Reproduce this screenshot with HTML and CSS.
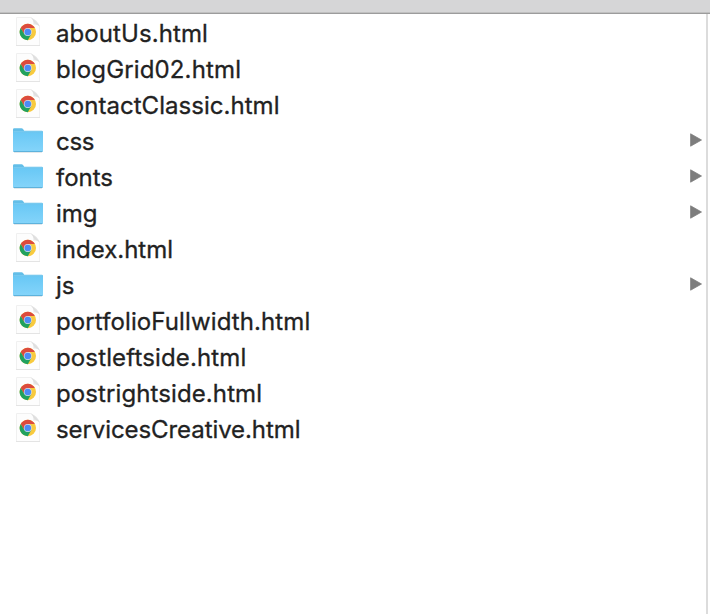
FILE: index.html
```html
<!DOCTYPE html>
<html lang="en">
<head>
<meta charset="utf-8">
<title>Files</title>
<link rel="stylesheet" href="styles.css">
</head>
<body>
<svg class="defs" aria-hidden="true">
  <defs>
    <linearGradient id="folder-fill" x1="0" y1="0" x2="0" y2="1"><stop offset="0" stop-color="#69c8f5"/><stop offset="1" stop-color="#84d4fa"/></linearGradient>
    <linearGradient id="fold-fill" x1="0" y1="1" x2="1" y2="0"><stop offset="0" stop-color="#fff"/><stop offset="0.5" stop-color="#dedede"/><stop offset="1" stop-color="#fafafa"/></linearGradient>
    <symbol id="html-file" viewBox="0 0 32 32">
      <path d="M4.500 1.500h15l8 8v20h-23z" fill="#fdfdfd" stroke="#f0f0f0"/>
      <path d="M4 29.500h24" stroke="#e4e4e4"/>
      <path d="M18.500 1.500q3.500 2.500 2.800 7.200q4-.7 6.200 1.800q-1.500-6.500-9-9z" fill="url(#fold-fill)"/>
      <circle cx="15.800" cy="16" r="8.200" fill="#f8ca3e"/>
      <path d="M8.700 11.900A8.200 8.200 0 0 1 22.900 11.900H15.800L12.250 18.050Z" fill="#dc4b3e"/>
      <path d="M8.700 11.900A8.200 8.200 0 0 0 15.800 24.200L19.350 18.050H12.250Z" fill="#20a15f"/>
      <circle cx="15.800" cy="16" r="3.900" fill="#d5dcec"/>
      <circle cx="15.800" cy="16" r="3.300" fill="#4c8bf5"/>
    </symbol>
    <symbol id="folder" viewBox="0 0 32 32">
      <path d="M1 5.500q0-1.200 1.200-1.200h7.300q1 0 1.700 1l1 1.400h17.600q1.200 0 1.200 1.200V27H1z" fill="#63bee8"/>
      <path d="M1.500 7.900h29" stroke="#84d2f4"/>
      <path d="M1 8.400h30v18.100q0 1.200-1.200 1.200H2.200q-1.200 0-1.200-1.200z" fill="url(#folder-fill)"/>
      <path d="M1.500 27.500h29" stroke="#5db2dc"/>
      <path d="M2 28.500h28" stroke="#e2e8eb"/>
    </symbol>
    <symbol id="arrow" viewBox="0 0 12 14">
      <path d="M.6.800v12.400L11.500 7z" fill="#7d7d7d" stroke="#7d7d7d" stroke-width=".8" stroke-linejoin="round"/>
    </symbol>
  </defs>
</svg>
<header class="bar"></header>
<main class="column">
  <ul class="files">
    <li class="row"><svg class="icon"><use href="#html-file"/></svg><span class="name about">aboutUs.html</span></li>
    <li class="row"><svg class="icon"><use href="#html-file"/></svg><span class="name blog">blogGrid02.html</span></li>
    <li class="row"><svg class="icon"><use href="#html-file"/></svg><span class="name contact">contactClassic.html</span></li>
    <li class="row"><svg class="icon"><use href="#folder"/></svg><span class="name css">css</span><svg class="arrow"><use href="#arrow"/></svg></li>
    <li class="row"><svg class="icon"><use href="#folder"/></svg><span class="name">fonts</span><svg class="arrow"><use href="#arrow"/></svg></li>
    <li class="row"><svg class="icon"><use href="#folder"/></svg><span class="name">img</span><svg class="arrow"><use href="#arrow"/></svg></li>
    <li class="row"><svg class="icon"><use href="#html-file"/></svg><span class="name">index.html</span></li>
    <li class="row"><svg class="icon"><use href="#folder"/></svg><span class="name">js</span><svg class="arrow"><use href="#arrow"/></svg></li>
    <li class="row"><svg class="icon"><use href="#html-file"/></svg><span class="name portfolio">portfolioFullwidth.html</span></li>
    <li class="row"><svg class="icon"><use href="#html-file"/></svg><span class="name postleft">postleftside.html</span></li>
    <li class="row"><svg class="icon"><use href="#html-file"/></svg><span class="name postright">postrightside.html</span></li>
    <li class="row"><svg class="icon"><use href="#html-file"/></svg><span class="name services">servicesCreative.html</span></li>
  </ul>
</main>
</body>
</html>
```
FILE: styles.css
```css
* { box-sizing: border-box; }
body {
  margin: 0;
  height: 614px;
  display: flex;
  flex-direction: column;
  background: #fff;
  color: #222;
  font-family: Inter, "Liberation Sans", sans-serif;
  overflow: hidden;
}
.defs { position: absolute; width: 0; height: 0; }
.bar {
  flex: none;
  height: 14px;
  background: #d6d6d7;
  border-bottom: 1px solid #9c9c9c;
  box-shadow: inset 0 -1px #c0c0c0;
}
.column {
  flex: 1;
  width: 708px;
  border-right: 2px solid #dcdcdc;
}
.files { list-style: none; margin: 0; padding: 0; }
.row {
  display: flex;
  align-items: center;
  height: 36px;
  padding: 0 4px 0 12px;
}
.icon { flex: none; width: 32px; height: 32px; }
.name {
  margin-left: 12px;
  padding-top: 3px;
  font-size: 24px;
  line-height: 33px;
  letter-spacing: 0;
  white-space: nowrap;
  -webkit-text-stroke: 0.3px #222;
}
.about { letter-spacing: 0.09px; }
.blog { letter-spacing: 0.14px; }
.contact { letter-spacing: 0.04px; }
.css { letter-spacing: -0.3px; }
.portfolio { letter-spacing: 0.11px; }
.postleft { letter-spacing: 0.14px; }
.postright { letter-spacing: 0.1px; }
.services { letter-spacing: -0.08px; }
.arrow { margin: 0 0 0 auto; width: 12px; height: 14px; }
```
